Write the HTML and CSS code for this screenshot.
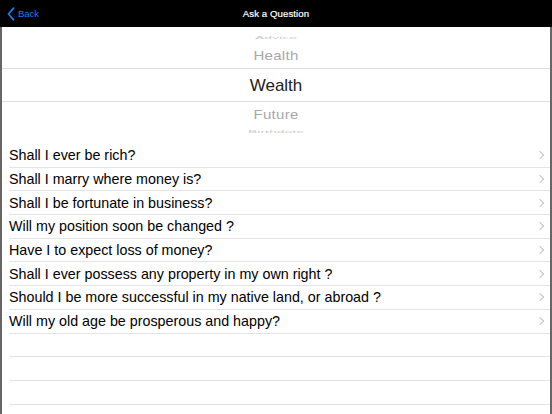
FILE: index.html
```html
<!DOCTYPE html>
<html>
<head>
<meta charset="utf-8">
<link rel="stylesheet" href="styles.css">
</head>
<body>
<div class="nav">
  <div class="back">
    <svg class="back-icon" width="8" height="14" viewBox="0 0 8 14"><path d="M6.5 1.2 L1.5 7 L6.5 12.8" fill="none" stroke="#1a7cf0" stroke-width="1.8" stroke-linecap="round" stroke-linejoin="round"/></svg>
    <span>Back</span>
  </div>
  <div class="title">Ask a Question</div>
</div>
<div class="content">
  <div class="picker">
    <div class="pk pk-far-top"><span>Advice</span></div>
    <div class="pk pk-near pk-high"><span>Health</span></div>
    <div class="pk pk-sel"><span>Wealth</span></div>
    <div class="pk pk-near pk-low"><span>Future</span></div>
    <div class="pk pk-far-bot"><span>Birthdate</span></div>
  </div>
  <div class="list">
    <div class="row"><span>Shall I ever be rich?</span><i class="chev"></i></div>
    <div class="row"><span>Shall I marry where money is?</span><i class="chev"></i></div>
    <div class="row"><span>Shall I be fortunate in business?</span><i class="chev"></i></div>
    <div class="row"><span>Will my position soon be changed ?</span><i class="chev"></i></div>
    <div class="row"><span>Have I to expect loss of money?</span><i class="chev"></i></div>
    <div class="row"><span>Shall I ever possess any property in my own right ?</span><i class="chev"></i></div>
    <div class="row"><span>Should I be more successful in my native land, or abroad ?</span><i class="chev"></i></div>
    <div class="row"><span>Will my old age be prosperous and happy?</span><i class="chev"></i></div>
    <div class="row empty"></div>
    <div class="row empty"></div>
    <div class="row empty"></div>
  </div>
</div>
</body>
</html>
```
FILE: styles.css
```css
html, body {
  margin: 0;
  padding: 0;
  background: #fff;
  font-family: "Liberation Sans", Arial, sans-serif;
  width: 552px;
  height: 414px;
  overflow: hidden;
}
.nav {
  height: 27px;
  background: #000;
  display: flex;
  align-items: center;
  justify-content: center;
  position: relative;
}
.back {
  position: absolute;
  left: 7px;
  top: 0;
  height: 27px;
  display: flex;
  align-items: center;
  gap: 3px;
  color: #1a7cf0;
  font-size: 9.5px;
}
.back-icon { display: block; }
.title {
  color: #fff;
  font-size: 9.6px;
  letter-spacing: 0.1px;
  -webkit-text-stroke: 0.2px #fff;
}
.content {
  height: 387px;
  border-left: 2px solid #666;
  border-right: 2px solid #666;
  box-sizing: border-box;
  overflow: hidden;
}
.picker {
  display: flex;
  flex-direction: column;
  height: 117px;
}
.pk {
  display: flex;
  align-items: center;
  justify-content: center;
  text-align: center;
  flex-shrink: 0;
}
.pk-far-top { height: 18px; color: #ccc; font-size: 14px; padding-top: 3px; box-sizing: border-box; }
.pk-far-top span { transform: scaleY(0.25); }
.pk-far-bot { height: 17px; color: #ccc; font-size: 14px; padding-bottom: 3px; box-sizing: border-box; }
.pk-far-bot span { transform: scaleY(0.25); }
.pk-near { height: 23px; color: #a8a8a8; font-size: 15px; letter-spacing: 0.3px; }
.pk-near span { transform: scaleY(0.9); }
.pk-high { padding-bottom: 2px; box-sizing: border-box; }
.pk-low { padding-top: 2px; box-sizing: border-box; }
.pk-sel {
  height: 34px;
  box-sizing: border-box;
  color: #222;
  font-size: 17px;
  border-top: 1px solid #dedede;
  border-bottom: 1px solid #dedede;
}
.pk-sel span { position: relative; top: 1px; }
.list {
  display: flex;
  flex-direction: column;
}
.row {
  height: 23.7px;
  flex-shrink: 0;
  margin-left: 7px;
  box-sizing: border-box;
  border-bottom: 1px solid #e4e4e6;
  display: flex;
  align-items: center;
  justify-content: space-between;
  padding-right: 7px;
  font-size: 14.3px;
  color: #000;
}
.chev {
  width: 5px;
  height: 5px;
  border-top: 1px solid #c4c4c8;
  border-right: 1px solid #c4c4c8;
  transform: rotate(45deg);
  margin-right: 0;
}
```
